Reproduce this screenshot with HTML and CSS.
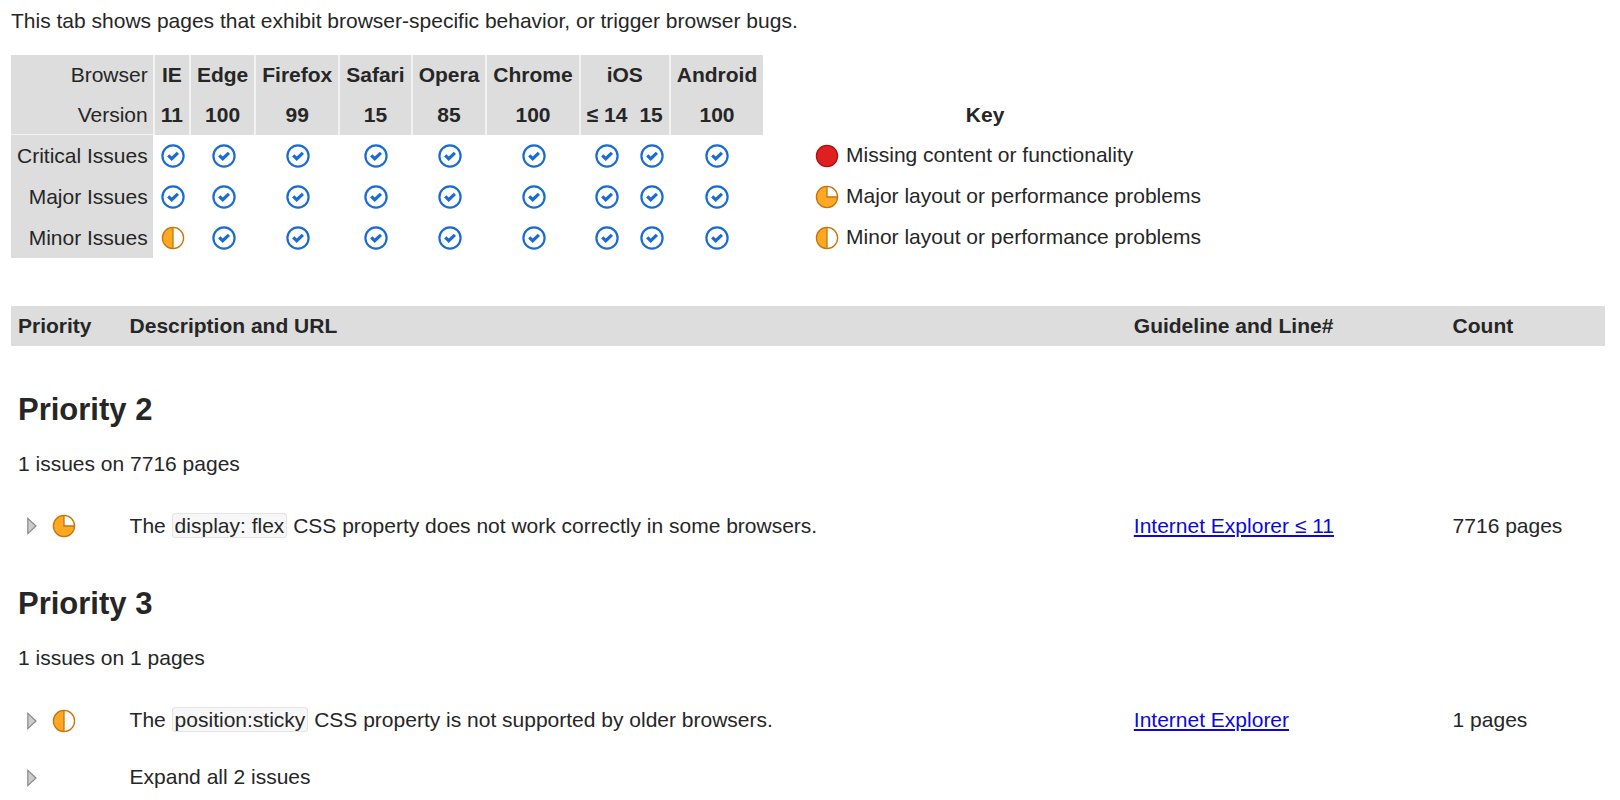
FILE: index.html
```html
<!DOCTYPE html>
<html lang="en">
	<head>
		<meta charset="utf-8">
		<title>Browser compatibility</title>
		<link rel="stylesheet" href="styles.css">
	</head>
	<body>
		<!-- shared icons -->
		<svg class="sprite" aria-hidden="true">
			<symbol id="ok" viewBox="0 0 24 24">
				<circle cx="12" cy="12" r="10.6" fill="#fff" stroke="#1a6cd4" stroke-width="2.2"/>
				<path d="M7.2 11.4l3.5 3.3 6.2-5.9" fill="none" stroke="#1a6cd4" stroke-width="3.2"/>
			</symbol>
			<symbol id="critical" viewBox="0 0 24 24">
				<circle cx="12" cy="12" r="10.6" fill="#df2020" stroke="#b01010" stroke-width="1.3"/>
			</symbol>
			<symbol id="major" viewBox="0 0 24 24">
				<circle cx="12" cy="12" r="10.6" fill="#fff"/>
				<path d="M12 1.4A10.6 10.6 0 1 0 22.6 12H12z" fill="#ffa824"/>
				<path d="M12 1.4V12h10.6" fill="none" stroke="#c8720a" stroke-width="1.3"/>
				<circle cx="12" cy="12" r="10.6" fill="none" stroke="#c8720a" stroke-width="1.3"/>
			</symbol>
			<symbol id="minor" viewBox="0 0 24 24">
				<circle cx="12" cy="12" r="10.6" fill="#fff"/>
				<path d="M12 1.4a10.6 10.6 0 0 0 0 21.2z" fill="#ffa824"/>
				<path d="M12 1.4v21.2" stroke="#c8720a" stroke-width="1.3"/>
				<circle cx="12" cy="12" r="10.6" fill="none" stroke="#c8720a" stroke-width="1.3"/>
			</symbol>
			<symbol id="arrow" viewBox="0 0 10 18">
				<path d="M.8 1.4v15.2L9 9z" fill="#ccc" stroke="#888" stroke-width="1.2"/>
			</symbol>
		</svg>

		<p class="intro">This tab shows pages that exhibit browser-specific behavior, or trigger browser bugs.</p>

		<div class="summary">
			<table class="browsers">
				<thead>
					<tr>
						<th class="label" scope="row">Browser</th>
						<th>IE</th>
						<th>Edge</th>
						<th>Firefox</th>
						<th>Safari</th>
						<th>Opera</th>
						<th>Chrome</th>
						<th colspan="2">iOS</th>
						<th>Android</th>
					</tr>
					<tr>
						<th class="label" scope="row">Version</th>
						<th>11</th>
						<th>100</th>
						<th>99</th>
						<th>15</th>
						<th>85</th>
						<th>100</th>
						<th class="joined">≤ 14</th>
						<th>15</th>
						<th>100</th>
					</tr>
				</thead>
				<tbody>
					<tr>
						<th class="label" scope="row">Critical Issues</th>
						<td><svg class="icon"><use href="#ok"/></svg></td>
						<td><svg class="icon"><use href="#ok"/></svg></td>
						<td><svg class="icon"><use href="#ok"/></svg></td>
						<td><svg class="icon"><use href="#ok"/></svg></td>
						<td><svg class="icon"><use href="#ok"/></svg></td>
						<td><svg class="icon"><use href="#ok"/></svg></td>
						<td><svg class="icon"><use href="#ok"/></svg></td>
						<td><svg class="icon"><use href="#ok"/></svg></td>
						<td><svg class="icon"><use href="#ok"/></svg></td>
					</tr>
					<tr>
						<th class="label" scope="row">Major Issues</th>
						<td><svg class="icon"><use href="#ok"/></svg></td>
						<td><svg class="icon"><use href="#ok"/></svg></td>
						<td><svg class="icon"><use href="#ok"/></svg></td>
						<td><svg class="icon"><use href="#ok"/></svg></td>
						<td><svg class="icon"><use href="#ok"/></svg></td>
						<td><svg class="icon"><use href="#ok"/></svg></td>
						<td><svg class="icon"><use href="#ok"/></svg></td>
						<td><svg class="icon"><use href="#ok"/></svg></td>
						<td><svg class="icon"><use href="#ok"/></svg></td>
					</tr>
					<tr>
						<th class="label" scope="row">Minor Issues</th>
						<td><svg class="icon"><use href="#minor"/></svg></td>
						<td><svg class="icon"><use href="#ok"/></svg></td>
						<td><svg class="icon"><use href="#ok"/></svg></td>
						<td><svg class="icon"><use href="#ok"/></svg></td>
						<td><svg class="icon"><use href="#ok"/></svg></td>
						<td><svg class="icon"><use href="#ok"/></svg></td>
						<td><svg class="icon"><use href="#ok"/></svg></td>
						<td><svg class="icon"><use href="#ok"/></svg></td>
						<td><svg class="icon"><use href="#ok"/></svg></td>
					</tr>
				</tbody>
			</table>

			<table class="key">
				<thead>
					<tr><th>Key</th></tr>
				</thead>
				<tbody>
					<tr><td><svg class="icon"><use href="#critical"/></svg> Missing content or functionality</td></tr>
					<tr><td><svg class="icon"><use href="#major"/></svg> Major layout or performance problems</td></tr>
					<tr><td><svg class="icon"><use href="#minor"/></svg> Minor layout or performance problems</td></tr>
				</tbody>
			</table>
		</div>

		<table class="issues">
			<thead>
				<tr>
					<th class="col-priority">Priority</th>
					<th class="col-description">Description and URL</th>
					<th class="col-guideline">Guideline and Line#</th>
					<th class="col-count">Count</th>
				</tr>
			</thead>
			<tbody>
				<tr class="group first">
					<td colspan="4">
						<h2>Priority 2</h2>
						<p>1 issues on 7716 pages</p>
					</td>
				</tr>
				<tr>
					<td>
						<button class="toggle" type="button" aria-label="Expand issue"><svg class="arrow"><use href="#arrow"/></svg></button>
						<svg class="icon"><use href="#major"/></svg>
					</td>
					<td>The <code>display: flex</code> CSS property does not work correctly in some browsers.</td>
					<td><a href="#">Internet Explorer ≤ 11</a></td>
					<td>7716 pages</td>
				</tr>
			</tbody>
			<tbody>
				<tr class="group">
					<td colspan="4">
						<h2>Priority 3</h2>
						<p>1 issues on 1 pages</p>
					</td>
				</tr>
				<tr>
					<td>
						<button class="toggle" type="button" aria-label="Expand issue"><svg class="arrow"><use href="#arrow"/></svg></button>
						<svg class="icon"><use href="#minor"/></svg>
					</td>
					<td>The <code>position:sticky</code> CSS property is not supported by older browsers.</td>
					<td><a href="#">Internet Explorer</a></td>
					<td>1 pages</td>
				</tr>
				<tr>
					<td>
						<button class="toggle" type="button" aria-label="Expand all issues"><svg class="arrow"><use href="#arrow"/></svg></button>
					</td>
					<td colspan="3">Expand all 2 issues</td>
				</tr>
			</tbody>
		</table>
	</body>
</html>
```
FILE: styles.css
```css
body {
	margin: 9px 15px 0 11px;
	font-family: "Liberation Sans", Arial, sans-serif;
	font-size: 21px;
	line-height: 24px;
	color: #262626;
	background-color: #fff;
}

table {
	border-collapse: separate;
	border-spacing: 0;
}

.sprite {
	display: none;
}

.icon {
	width: 24px;
	height: 24px;
	vertical-align: middle;
}

.intro {
	margin: 0 0 22px;
}

/* browser table and key, side by side */
.summary {
	display: flex;
	align-items: flex-end;
	margin-bottom: 48px;
}

.browsers th,
.browsers td,
.key th,
.key td {
	height: 41px;
	padding: 0 6px;
	box-sizing: border-box;
	text-align: center;
	white-space: nowrap;
}

.browsers thead th,
.key thead th {
	height: 40px;
}

.browsers th {
	background-color: #ddd;
	border-right: 2px solid #f2f2f2;
}

.browsers th:last-child,
.browsers th.joined {
	border-right: 0;
}

.browsers .label {
	padding-right: 5px;
	font-weight: normal;
	text-align: right;
}

/* the icon cells are white, so the line after the row labels is too */
.browsers tbody .label {
	border-right-color: #fff;
}

.browsers thead tr:last-child .label {
	border-bottom: 1px solid #f2f2f2;
}

.key td {
	padding-left: 52px;
	text-align: left;
}

.key .icon {
	margin-right: 1px;
}

/* issue list */
.issues {
	width: 100%;
	table-layout: fixed;
}

.issues th {
	height: 40px;
	padding: 0 7px;
	box-sizing: border-box;
	text-align: left;
	background-color: #ddd;
}

.issues td {
	padding: 16px 7px;
	vertical-align: middle;
}

.col-priority {
	width: 7%;
}

.col-description {
	width: 63%;
}

.col-guideline {
	width: 20%;
}

.col-count {
	width: 10%;
}

.issues .group td {
	padding: 32px 7px 21px;
}

.issues .first td {
	padding-top: 46px;
}

.group h2 {
	margin: 0 0 24px;
	font-size: 31px;
	line-height: 36px;
}

.group p {
	margin: 0;
}

.toggle {
	margin: 0 9px;
	padding: 0;
	border: 0;
	background: none;
	vertical-align: middle;
	cursor: pointer;
}

.arrow {
	display: block;
	width: 10px;
	height: 18px;
}

code {
	padding: 0 2px;
	font-family: inherit;
	background-color: #f7f7f7;
	border: 1px solid #e4e4e4;
	border-radius: 3px;
}

a {
	color: #0b08dc;
}
```
